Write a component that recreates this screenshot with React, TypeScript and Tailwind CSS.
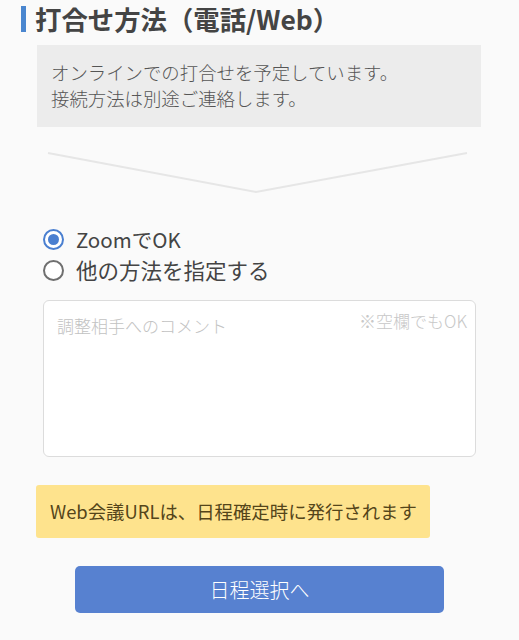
import { useState } from 'react'

const FONT = '"Noto Sans CJK JP", "Noto Sans", sans-serif'

export default function App() {
  const [method, setMethod] = useState<'zoom' | 'other'>('zoom')

  return (
    <div className="min-h-screen w-full bg-[#fafafa] font-light text-[#555]" style={{ fontFamily: FONT }}>
      {/* heading */}
      <div className="flex items-center pt-[1px] pl-[21px]">
        <div className="h-[26px] w-[5px] bg-[#4a86cf]" />
        <h2 className="ml-[9px] text-[26.4px] font-bold leading-[36px] text-[#444]">打合せ方法（電話/Web）</h2>
      </div>

      {/* info box */}
      <div className="ml-[37px] mt-[8px] w-[444px] bg-[#ececec] pl-[14px] pt-[14px] pb-[16px] text-[18.4px] leading-[26px] text-[#555]">
        <p>オンラインでの打合せを予定しています。</p>
        <p>接続方法は別途ご連絡します。</p>
      </div>

      {/* chevron divider */}
      <svg className="block" width="519" height="70" viewBox="0 0 519 70">
        <polyline points="48,26 256,65 467,26" fill="none" stroke="#e6e6e6" strokeWidth="2" />
      </svg>

      {/* radios */}
      <div className="ml-[43px] mt-[27px] font-normal">
        <label className="flex h-[31px] cursor-pointer items-center gap-[12px]" onClick={() => setMethod('zoom')}>
          <Radio checked={method === 'zoom'} />
          <span className="text-[20.5px] text-[#444]">ZoomでOK</span>
        </label>
        <label className="flex h-[31px] cursor-pointer items-center gap-[12px]" onClick={() => setMethod('other')}>
          <Radio checked={method === 'other'} />
          <span className="text-[21.5px] text-[#444]">他の方法を指定する</span>
        </label>
      </div>

      {/* comment */}
      <div className="relative ml-[43px] mt-[14px] h-[157px] w-[433px]">
        <textarea
          className="h-full w-full resize-none rounded-[6px] border border-[#dcdcdc] bg-white pl-[13px] pt-[13px] text-[17px] font-light leading-[24px] text-[#444] outline-none placeholder:text-[#c2c2c2]"
          placeholder="調整相手へのコメント"
          style={{ fontFamily: FONT }}
        />
        <span className="pointer-events-none absolute right-[9px] top-[10px] text-[17px] leading-[22px] text-[#c8c8c8]">※空欄でもOK</span>
      </div>

      {/* notice */}
      <div className="ml-[36px] mt-[28px] flex h-[53px] w-[394px] items-center rounded-[3px] bg-[#fee38d] pl-[14px] text-[18.4px] font-normal text-[#54451a]">
        Web会議URLは、日程確定時に発行されます
      </div>

      {/* submit */}
      <button className="ml-[75px] mt-[28px] flex h-[47px] w-[369px] items-center justify-center rounded-[5px] bg-[#5781d0] text-[20px] font-light text-white">
        日程選択へ
      </button>
    </div>
  )
}

function Radio({ checked }: { checked: boolean }) {
  return (
    <span
      className={
        checked
          ? 'flex h-[21px] w-[21px] items-center justify-center rounded-full border-2 border-[#4a7fd0] bg-white'
          : 'flex h-[21px] w-[21px] items-center justify-center rounded-full border-2 border-[#6f6f6f] bg-white'
      }
    >
      {checked && <span className="h-[11px] w-[11px] rounded-full bg-[#4a7fd0]" />}
    </span>
  )
}
